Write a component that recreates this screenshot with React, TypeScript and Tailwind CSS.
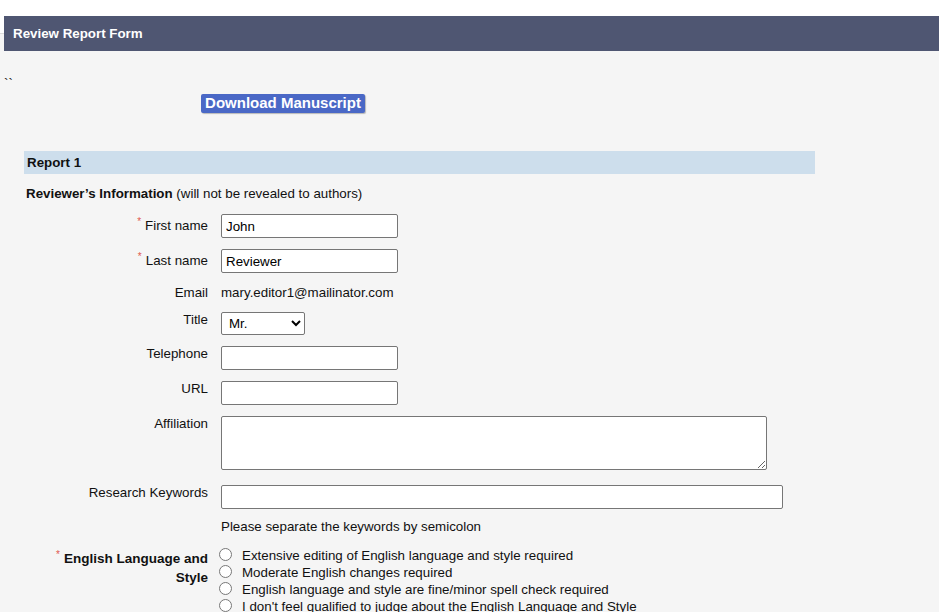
import type { ReactNode } from 'react';

type RowProps = {
  label: ReactNode;
  required?: boolean;
  labelClass?: string;
  className?: string;
  children: ReactNode;
};

// One label/field line of the form, label right-aligned in a fixed column
function FormRow({ label, required, labelClass = '', className = '', children }: RowProps) {
  return (
    <div className={`flex items-start ${className}`}>
      <div className={`w-[184px] shrink-0 text-right ${labelClass}`}>
        {required && (
          <span className="relative -top-[5px] mr-[4px] text-[10px] font-normal text-[#e0584f]">*</span>
        )}
        {label}
      </div>
      <div className="ml-[13px]">{children}</div>
    </div>
  );
}

const inputClass =
  'block h-[24px] border border-[#767676] rounded-[2px] bg-white px-[4px] text-[13.33px] text-black outline-none';

const englishOptions = [
  'Extensive editing of English language and style required',
  'Moderate English changes required',
  'English language and style are fine/minor spell check required',
  "I don't feel qualified to judge about the English Language and Style",
];

export default function App() {
  return (
    <div
      className="min-h-[612px] bg-white text-[13.33px] text-[#111]"
      style={{ fontFamily: '"Liberation Sans", Arial, sans-serif' }}
    >
      <div className="h-[16px]" />

      {/* Header */}
      <div className="flex">
        <div className="flex w-[4px] flex-col">
          <div className="h-[17px] bg-white" />
          <div className="flex-1 border-t border-[#dcdcdc] bg-[#f5f5f5]" />
        </div>
        <div className="flex h-[35px] flex-1 items-center bg-[#4f5672] pl-[9px] text-[13.33px] font-bold text-white">
          Review Report Form
        </div>
      </div>

      <div className="min-h-[561px] bg-[#f5f5f5] pb-[20px]">
        <div className="pl-[4px] pt-[25px] leading-[16px]">``</div>

        <div className="mt-[2px] pl-[201px]">
          <button
            type="button"
            className="flex h-[19px] w-[164px] items-center justify-center rounded-[2px] bg-[#4a68c6] text-[15px] font-bold text-white shadow-[1px_1px_1px_rgba(0,0,0,0.25)]"
          >
            Download Manuscript
          </button>
        </div>

        {/* Report section */}
        <div className="ml-[24px] mt-[38px] flex h-[23px] w-[791px] items-center bg-[#cddeec] pl-[3px] font-bold">
          Report 1
        </div>

        <div className="ml-[26px] mt-[12px] leading-[16px]">
          <span className="font-bold">Reviewer’s Information</span> (will not be revealed to authors)
        </div>

        <div className="ml-[24px]">
          <FormRow label="First name" required className="mt-[12px]" labelClass="pt-[3px] leading-[18px]">
            <input className={`${inputClass} w-[177px]`} defaultValue="John" />
          </FormRow>

          <FormRow label="Last name" required className="mt-[11px]" labelClass="pt-[3px] leading-[18px]">
            <input className={`${inputClass} w-[177px]`} defaultValue="Reviewer" />
          </FormRow>

          <FormRow label="Email" className="mt-[12px] leading-[16px]">
            <span>mary.editor1@mailinator.com</span>
          </FormRow>

          <FormRow label="Title" className="mt-[11px]" labelClass="leading-[15px]">
            <select
              className="block h-[23px] w-[84px] rounded-[2px] border border-[#767676] bg-white pl-[3px] text-[13.33px] text-black"
              defaultValue="Mr."
            >
              <option>Mr.</option>
              <option>Mrs.</option>
              <option>Ms.</option>
              <option>Dr.</option>
              <option>Prof.</option>
            </select>
          </FormRow>

          <FormRow label="Telephone" className="mt-[11px]" labelClass="leading-[15px]">
            <input className={`${inputClass} w-[177px]`} />
          </FormRow>

          <FormRow label="URL" className="mt-[11px]" labelClass="leading-[15px]">
            <input className={`${inputClass} w-[177px]`} />
          </FormRow>

          <FormRow label="Affiliation" className="mt-[11px]" labelClass="leading-[15px]">
            <textarea className="block h-[54px] w-[546px] rounded-[2px] border border-[#767676] bg-white text-[13.33px] outline-none" />
          </FormRow>

          <FormRow label="Research Keywords" className="mt-[15px]" labelClass="leading-[15px]">
            <input className={`${inputClass} w-[562px]`} />
          </FormRow>

          <div className="ml-[197px] mt-[10px] leading-[16px]">Please separate the keywords by semicolon</div>

          <FormRow
            label={
              <>
                English Language and
                <br />
                Style
              </>
            }
            required
            className="mt-[12px]"
            labelClass="pt-[3px] text-[13.5px] font-bold leading-[18px]"
          >
            <div className="-ml-[2px] flex flex-col">
              {englishOptions.map((opt) => (
                <label key={opt} className="flex h-[17px] items-center">
                  <input type="radio" name="english" className="-mt-[2px] h-[13px] w-[13px]" />
                  <span className="ml-[10px] leading-[17px]">{opt}</span>
                </label>
              ))}
            </div>
          </FormRow>
        </div>
      </div>
    </div>
  );
}
